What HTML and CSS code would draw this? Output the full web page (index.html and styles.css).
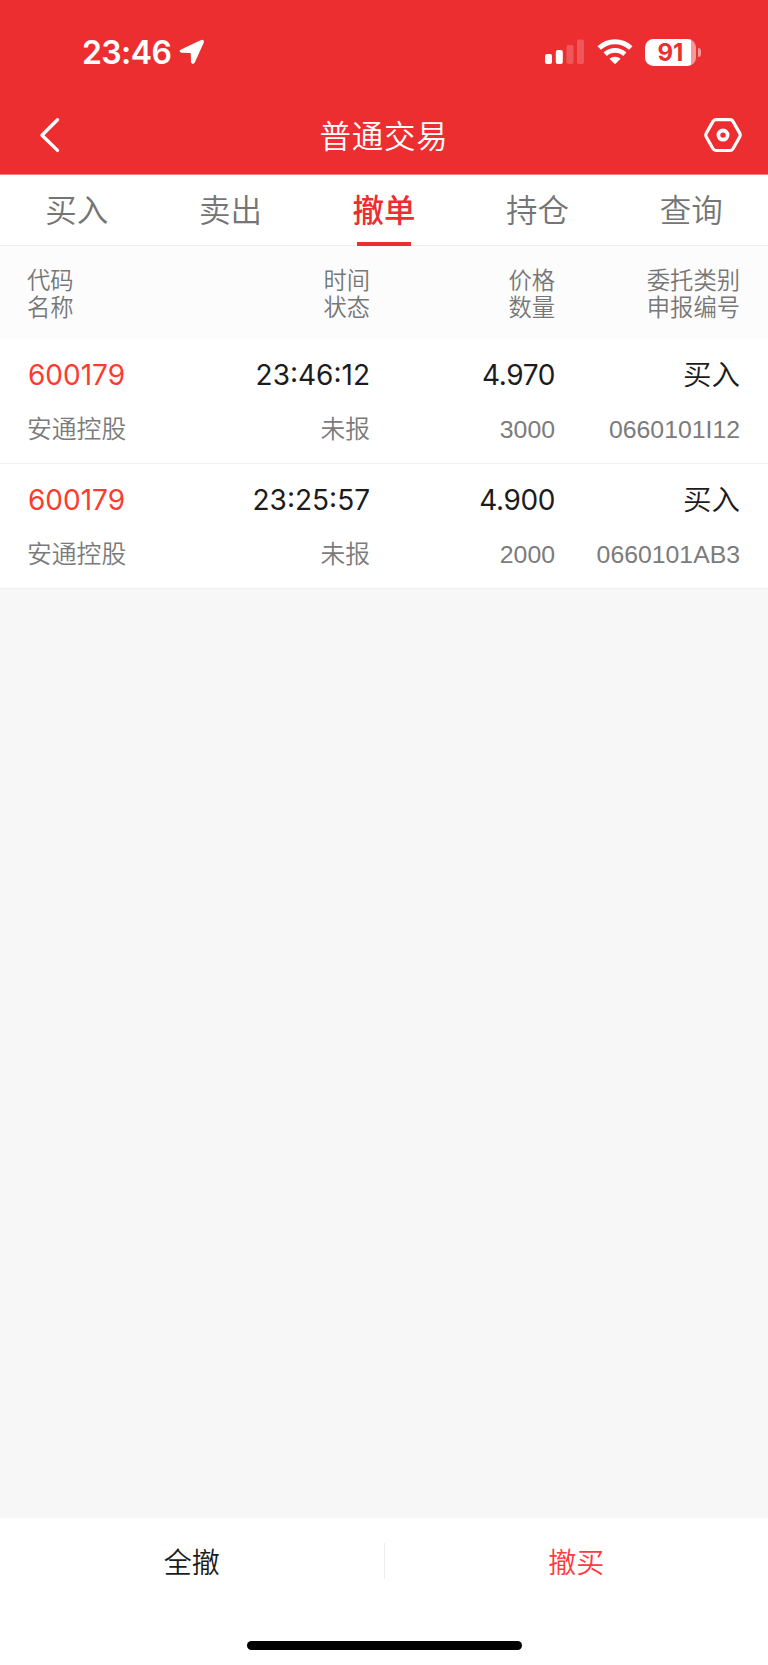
FILE: index.html
```html
<!DOCTYPE html>
<html lang="zh-CN">
<head>
    <meta charset="UTF-8">
    <meta name="viewport" content="width=device-width, initial-scale=1.0">
    <title>普通交易</title>
    <link rel="stylesheet" href="styles.css">
</head>
<body>
    <header class="header">
        <div class="status-bar">
            <div class="status-left">
                <span class="clock">23:46</span>
                <svg class="location" width="26" height="26" viewBox="0 0 26 26">
                    <path d="M2 10.6 L21.6 1.2 Q25.8 -.2 24.6 4 L15.8 23.6 Q13.8 26.4 12 23.6 L11.8 15 Q11.7 14 10.7 14 L2.4 13.7 Q-1 12.4 2 10.6 Z" fill="#fff"/>
                </svg>
            </div>
            <div class="status-right">
                <svg width="40" height="26" viewBox="0 0 40 26" fill="#fff">
                    <rect x="0" y="15" width="7" height="10" rx="2"/>
                    <rect x="10.8" y="11" width="7" height="14" rx="2"/>
                    <rect x="21.5" y="6" width="7" height="19" rx="2" opacity=".2"/>
                    <rect x="32" y=".5" width="7" height="24.5" rx="2" opacity=".2"/>
                </svg>
                <svg class="wifi" width="36" height="26" viewBox="0 0 36 26">
                    <path d="M2.2 9 A23 23 0 0 1 33.8 9" fill="none" stroke="#fff" stroke-width="5"/>
                    <path d="M8.2 15.2 A14.2 14.2 0 0 1 27.8 15.2" fill="none" stroke="#fff" stroke-width="4.8"/>
                    <path d="M12.4 19.8 A8.4 8.4 0 0 1 23.6 19.8 L18.8 24.6 Q18 25.2 17.2 24.6 Z" fill="#fff"/>
                </svg>
                <div class="battery"><span>91</span></div>
                <div class="battery-cap"></div>
            </div>
        </div>
        <nav class="nav-bar">
            <svg width="40" height="40" viewBox="0 0 40 40">
                <path d="M22.5 4.8 L7 20.2 L22.5 35.4" fill="none" stroke="#fff" stroke-width="3.4" stroke-linecap="round" stroke-linejoin="round"/>
            </svg>
            <h1>普通交易</h1>
            <svg width="40" height="40" viewBox="0 0 40 40" fill="none" stroke="#fff">
                <path d="M13 4.7 H27 Q29 4.7 30 6.4 L36.8 18.4 Q37.8 20.1 36.8 21.8 L30 33.8 Q29 35.5 27 35.5 H13 Q11 35.5 10 33.8 L3.2 21.8 Q2.2 20.1 3.2 18.4 L10 6.4 Q11 4.7 13 4.7 Z" stroke-width="3.2"/>
                <circle cx="20" cy="20.1" r="4.6" stroke-width="3.8"/>
            </svg>
        </nav>
    </header>

    <div class="tabs">
        <a class="tab">买入</a>
        <a class="tab">卖出</a>
        <a class="tab active">撤单</a>
        <a class="tab">持仓</a>
        <a class="tab">查询</a>
    </div>

    <main>
        <div class="table-head columns">
            <div>代码<br>名称</div>
            <div>时间<br>状态</div>
            <div>价格<br>数量</div>
            <div>委托类别<br>申报编号</div>
        </div>
        <div class="order columns">
            <div class="main-text code">600179</div>
            <div class="main-text">23:46:12</div>
            <div class="main-text price">4.970</div>
            <div class="main-text side">买入</div>
            <div class="sub-text">安通控股</div>
            <div class="sub-text">未报</div>
            <div class="sub-text">3000</div>
            <div class="sub-text">0660101I12</div>
        </div>
        <div class="order columns">
            <div class="main-text code">600179</div>
            <div class="main-text">23:25:57</div>
            <div class="main-text price">4.900</div>
            <div class="main-text side">买入</div>
            <div class="sub-text">安通控股</div>
            <div class="sub-text">未报</div>
            <div class="sub-text">2000</div>
            <div class="sub-text">0660101AB3</div>
        </div>
    </main>

    <footer class="footer">
        <div class="actions">
            <a class="action">全撤</a>
            <div class="divider"></div>
            <a class="action buy">撤买</a>
        </div>
        <div class="home-indicator"></div>
    </footer>
</body>
</html>
```
FILE: styles.css
```css
* {
    box-sizing: border-box;
}

body {
    display: flex;
    flex-direction: column;
    height: 1665px;
    margin: 0;
    background-color: #f7f7f7;
    color: #1c1c1c;
    font-family: Inter, "Noto Sans CJK SC", sans-serif;
}

svg {
    display: block;
}

/* Header */
.header {
    height: 175px;
    background-color: #ed2e31;
    border-bottom: 1px solid #f47f81;
    color: #fff;
}

.status-bar {
    display: flex;
    justify-content: space-between;
    height: 96px;
    padding: 32px 67px 24px 82px;
}

.status-left,
.status-right {
    display: flex;
    align-items: center;
    height: 40px;
}

.clock {
    width: 97px;
    padding-top: 2px;
    font-size: 32px;
    font-weight: 600;
    line-height: 40px;
    letter-spacing: -0.6px;
}

.wifi {
    margin: 0 12px;
}

.battery {
    width: 51px;
    height: 27px;
    border-radius: 8.5px;
    background: linear-gradient(to right, #fff 46px, #f69798 46px);
    color: #ed2e31;
    font-size: 24px;
    font-weight: 700;
    line-height: 27px;
    text-align: center;
}

.battery-cap {
    width: 3px;
    height: 9px;
    margin-left: 2px;
    border-radius: 0 4px 4px 0;
    background-color: #f69798;
}

.nav-bar {
    display: flex;
    justify-content: space-between;
    align-items: center;
    height: 78px;
    padding: 0 25px 0 35px;
}

h1 {
    margin: 0 10px 2px 0;
    font-size: 31.5px;
    font-weight: 350;
    letter-spacing: 0.7px;
}

/* Tabs */
.tabs {
    display: flex;
    height: 71px;
    background-color: #fff;
    border-bottom: 1px solid #ececec;
}

.tab {
    position: relative;
    flex: 1;
    color: #757575;
    font-size: 31.5px;
    font-weight: 350;
    line-height: 72px;
    text-align: center;
}

.tab.active {
    color: #ed2e31;
    font-weight: 500;
}

.tab.active::after {
    content: "";
    position: absolute;
    left: 50%;
    bottom: -1px;
    width: 54px;
    height: 4px;
    margin-left: -27px;
    background-color: #ed2e31;
}

/* Orders */
main {
    flex: 1;
}

.columns {
    display: grid;
    grid-template-columns: 158px 185px 185px 185px;
    padding: 0 28px 0 27px;
    text-align: right;
}

.columns > :nth-child(4n + 1) {
    text-align: left;
}

.table-head {
    height: 93px;
    padding-top: 21px;
    background-color: #fcfcfc;
    color: #777;
    font-size: 23.3px;
    font-weight: 350;
    line-height: 27.3px;
}

.order {
    grid-template-rows: 40px 40px;
    row-gap: 15px;
    height: 125px;
    padding-top: 16px;
    background-color: #fff;
    border-bottom: 1px solid #f0f0f0;
}

.main-text {
    font-size: 28px;
    line-height: 40px;
}

.price {
    letter-spacing: -0.4px;
}

.side {
    font-size: 28.5px;
    font-weight: 350;
}

.sub-text {
    color: #7b7b7b;
    font-family: "Liberation Sans", "Noto Sans CJK SC", sans-serif;
    font-size: 24.8px;
    font-weight: 350;
    line-height: 40px;
}

.code {
    padding-left: 1px;
    color: #fd3b30;
}

/* Footer */
.footer {
    height: 147px;
    background-color: #fff;
}

.actions {
    display: flex;
    align-items: center;
    height: 86px;
}

.action {
    flex: 1;
    font-size: 28px;
    font-weight: 350;
    text-align: center;
}

.buy {
    color: #fd3b40;
}

.divider {
    width: 1px;
    height: 36px;
    background-color: #eee;
}

.home-indicator {
    width: 275px;
    height: 9px;
    margin: 37px auto 0;
    border-radius: 5px;
    background-color: #000;
}
```
